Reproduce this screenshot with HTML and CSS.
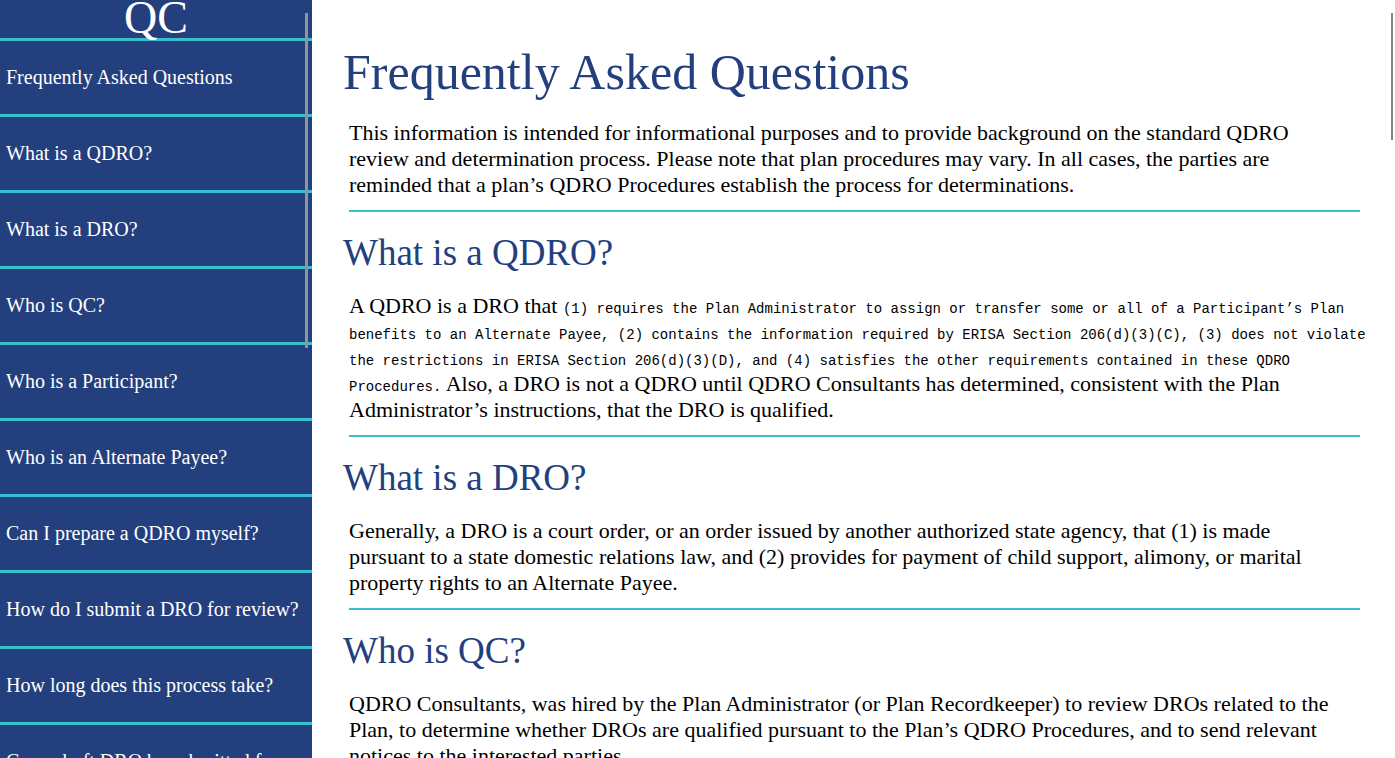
FILE: index.html
```
<!DOCTYPE html>
<html lang="en">
<head>
<meta charset="utf-8">
<title>Frequently Asked Questions</title>
<link rel="stylesheet" href="styles.css">
</head>
<body>
<div class="layout">
  <nav class="sidebar" aria-label="Questions">
    <div class="brand">QC</div>
    <a class="nav-link" href="#faq">Frequently Asked Questions</a>
    <a class="nav-link" href="#qdro">What is a QDRO?</a>
    <a class="nav-link" href="#dro">What is a DRO?</a>
    <a class="nav-link" href="#qc">Who is QC?</a>
    <a class="nav-link" href="#participant">Who is a Participant?</a>
    <a class="nav-link" href="#payee">Who is an Alternate Payee?</a>
    <a class="nav-link" href="#prepare">Can I prepare a QDRO myself?</a>
    <a class="nav-link" href="#submit">How do I submit a DRO for review?</a>
    <a class="nav-link" href="#time">How long does this process take?</a>
    <a class="nav-link" href="#draft">Can a draft DRO be submitted for review?</a>
    <span class="thumb thumb-side"></span>
  </nav>
  <main class="content">
    <section class="entry" id="faq">
      <h1 class="title">Frequently Asked Questions</h1>
      <p class="text">This information is intended for informational purposes and to provide background on the standard QDRO<br>review and determination process. Please note that plan procedures may vary. In all cases, the parties are<br>reminded that a plan’s QDRO Procedures establish the process for determinations.</p>
    </section>
    <section class="entry" id="qdro">
      <h2 class="question">What is a QDRO?</h2>
      <p class="text">A QDRO is a DRO that <code class="legal">(1) requires the Plan Administrator to assign or transfer some or all of a Participant’s Plan<br>benefits to an Alternate Payee, (2) contains the information required by ERISA Section 206(d)(3)(C), (3) does not violate<br>the restrictions in ERISA Section 206(d)(3)(D), and (4) satisfies the other requirements contained in these QDRO<br>Procedures.</code> Also, a DRO is not a QDRO until QDRO Consultants has determined, consistent with the Plan<br>Administrator’s instructions, that the DRO is qualified.</p>
    </section>
    <section class="entry" id="dro">
      <h2 class="question">What is a DRO?</h2>
      <p class="text">Generally, a DRO is a court order, or an order issued by another authorized state agency, that (1) is made<br>pursuant to a state domestic relations law, and (2) provides for payment of child support, alimony, or marital<br>property rights to an Alternate Payee.</p>
    </section>
    <section class="entry" id="qc">
      <h2 class="question">Who is QC?</h2>
      <p class="text">QDRO Consultants, was hired by the Plan Administrator (or Plan Recordkeeper) to review DROs related to the<br>Plan, to determine whether DROs are qualified pursuant to the Plan’s QDRO Procedures, and to send relevant<br>notices to the interested parties.</p>
    </section>
    <span class="thumb thumb-page"></span>
  </main>
</div>
</body>
</html>
```
FILE: styles.css
```
* {
  box-sizing: border-box;
}

body {
  margin: 0;
  background: #fff;
  color: #000;
  font-family: "Liberation Serif", "Times New Roman", serif;
}

.layout {
  display: grid;
  grid-template-columns: 312px 1fr;
  height: 100vh;
  overflow: hidden;
}

.sidebar,
.content {
  position: relative;
  min-height: 0;
  overflow: hidden;
}

.sidebar {
  background: #233f7e;
  color: #fff;
}

.brand {
  height: 41px;
  border-bottom: 3px solid #3bbfce;
  font-size: 46px;
  line-height: 36px;
  text-align: center;
}

.nav-link {
  display: block;
  padding: 25px 6px;
  border-bottom: 3px solid #3bbfce;
  color: inherit;
  font-size: 20px;
  line-height: 23px;
  text-decoration: none;
}

.content {
  padding: 43px 35px 0 31px;
}

.title,
.question {
  margin: 0;
  color: #233f7e;
  font-weight: 400;
}

.title {
  font-size: 50px;
  line-height: 58px;
  margin-bottom: 19px;
}

.question {
  font-size: 37px;
  line-height: 44px;
  margin: 19px 0 18px;
}

.text {
  margin: 0 0 0 6px;
  padding-bottom: 12px;
  border-bottom: 2px solid #3bbfce;
  font-size: 22px;
  line-height: 26px;
}

.legal {
  font-family: Consolas, "Liberation Mono", monospace;
  font-size: 14px;
  line-height: 1;
  white-space: nowrap;
}

.thumb {
  position: absolute;
  top: 13px;
  width: 3px;
  background: #949494;
}

.thumb-side {
  right: 4px;
  height: 335px;
}

.thumb-page {
  right: 2px;
  width: 2px;
  height: 127px;
  background: #858585;
}
```
